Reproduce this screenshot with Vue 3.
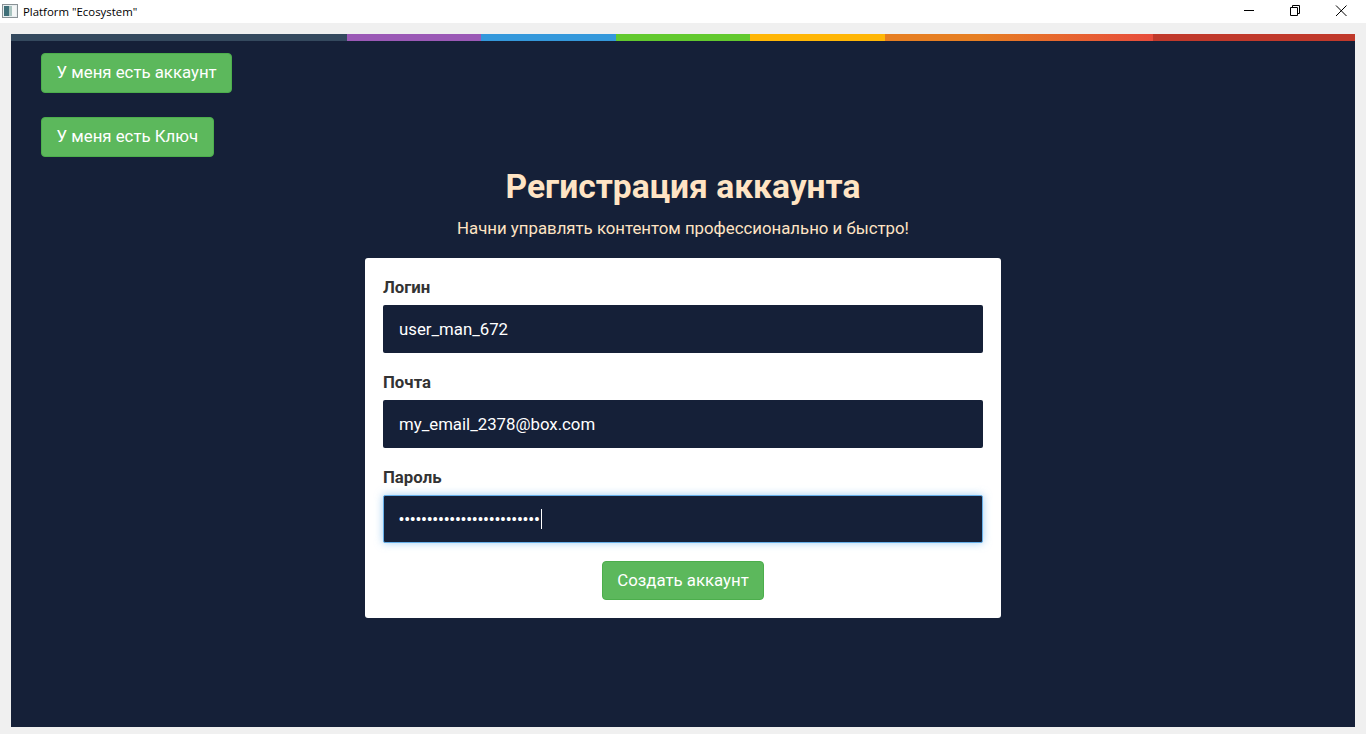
<script setup>
const segments = [
  { cls: 'seg-slate', grow: 25 },
  { cls: 'seg-purple', grow: 10 },
  { cls: 'seg-blue', grow: 10 },
  { cls: 'seg-green', grow: 10 },
  { cls: 'seg-yellow', grow: 10 },
  { cls: 'seg-orange', grow: 20 },
  { cls: 'seg-red', grow: 15 }
]
const fields = [
  { label: 'Логин', value: 'user_man_672' },
  { label: 'Почта', value: 'my_email_2378@box.com' }
]
const dots = '•'.repeat(25)
</script>

<template>
  <div class="window">
    <header class="titlebar">
      <div class="title-left">
        <svg class="app-icon" width="16" height="14" viewBox="0 0 16 14">
          <rect x="0.5" y="0.5" width="15" height="13" fill="#e8eef0" stroke="#8a9296" />
          <rect x="2" y="2" width="5" height="10" fill="#3f6f78" />
          <rect x="7" y="2" width="3" height="10" fill="#a9c4c0" />
          <rect x="10" y="2" width="4" height="10" fill="#f4f6f6" />
        </svg>
        <span class="title-text">Platform "Ecosystem"</span>
      </div>
      <div class="controls">
        <svg width="46" height="22" viewBox="0 0 46 22">
          <path d="M18 10.5h10" stroke="#000" fill="none" />
        </svg>
        <svg width="46" height="22" viewBox="0 0 46 22">
          <path d="M18.5 7.5h7v8h-7zM20.5 7.5v-2h7v8h-2" stroke="#000" fill="none" />
        </svg>
        <svg width="46" height="22" viewBox="0 0 46 22">
          <path d="M18 5.5l10.5 10.5M28.5 5.5L18 16" stroke="#000" fill="none" />
        </svg>
      </div>
    </header>

    <main class="panel">
      <div class="strip">
        <span
          v-for="s in segments"
          :key="s.cls"
          class="seg"
          :class="s.cls"
          :style="{ flexGrow: s.grow }"
        ></span>
      </div>
      <div class="actions">
        <button class="btn">У меня есть аккаунт</button>
        <button class="btn">У меня есть Ключ</button>
      </div>
      <h1 class="heading">Регистрация аккаунта</h1>
      <p class="sub">Начни управлять контентом профессионально и быстро!</p>
      <form class="card" @submit.prevent>
        <div v-for="f in fields" :key="f.label" class="field">
          <label class="label">{{ f.label }}</label>
          <div class="input">{{ f.value }}</div>
        </div>
        <div class="field">
          <label class="label">Пароль</label>
          <div class="input focused"><span class="dots">{{ dots }}</span><span class="caret"></span></div>
        </div>
        <div class="submit-row">
          <button class="btn" type="submit">Создать аккаунт</button>
        </div>
      </form>
    </main>
  </div>
</template>

<style scoped>
.window {
  width: 1366px;
  height: 734px;
  background: #f0f0f0;
  display: flex;
  flex-direction: column;
  overflow: hidden;
  font-family: Roboto, "Liberation Sans", sans-serif;
}
.titlebar {
  height: 23px;
  flex: none;
  background: #fff;
  display: flex;
  justify-content: space-between;
  align-items: flex-start;
}
.title-left {
  display: flex;
  align-items: center;
  height: 23px;
  padding-left: 2px;
  gap: 5px;
}
.app-icon { margin-bottom: 2px; }
.title-text {
  font-family: "Open Sans", "Noto Sans", sans-serif;
  font-size: 11.4px;
  color: #000;
  margin-bottom: 1px;
}
.controls {
  display: flex;
  margin-right: 2px;
}
.controls svg { display: block; }
.panel {
  margin: 11px 11px 7px;
  height: 693px;
  background: #152038;
  display: flex;
  flex-direction: column;
  align-items: center;
}
.strip {
  width: 100%;
  height: 7px;
  display: flex;
  flex: none;
}
.seg { flex: 1 1 0; }
.seg-slate { background: #34495e; }
.seg-purple { background: #9b59b6; }
.seg-blue { background: #3498db; }
.seg-green { background: #62c92e; }
.seg-yellow { background: #ffb606; }
.seg-orange { background: linear-gradient(90deg, #e67e22 0%, #e67e22 35%, #e74c3c 100%); }
.seg-red { background: #c0392b; }
.actions {
  align-self: flex-start;
  padding: 12.4px 0 0 30px;
  display: flex;
  flex-direction: column;
  align-items: flex-start;
  gap: 24.8px;
}
.btn {
  height: 39.2px;
  padding: 0 14.6px;
  background: #5cb85c;
  border: 1px solid #4cae4c;
  border-radius: 4px;
  color: #fff;
  font-family: inherit;
  font-size: 16.8px;
  font-weight: 400;
  line-height: 25.2px;
  white-space: nowrap;
}
.heading {
  margin: 9.4px 0 0;
  font-size: 33.6px;
  line-height: 42px;
  font-weight: 700;
  color: #ffe4c4;
}
.sub {
  margin: 10px 0 0;
  font-size: 16.8px;
  line-height: 20px;
  color: #ffe4c4;
}
.card {
  width: 636px;
  box-sizing: border-box;
  margin-top: 20px;
  padding: 18px;
  background: #fff;
  border-radius: 3px;
  display: flex;
  flex-direction: column;
  gap: 18px;
}
.field {
  display: flex;
  flex-direction: column;
  gap: 8px;
}
.label {
  font-size: 16.8px;
  line-height: 23px;
  height: 21px;
  font-weight: 700;
  color: #333;
}
.input {
  height: 48px;
  box-sizing: border-box;
  padding: 0 16px;
  border-radius: 2px;
  background: #152038;
  color: #fff;
  font-size: 16.8px;
  line-height: 48px;
  display: flex;
  align-items: center;
}
.focused {
  border: 1px solid #66afe9;
  padding: 0 15px;
  box-shadow: 0 0 8px rgba(102, 175, 233, 0.6);
}
.dots {
  font-family: "Liberation Sans", sans-serif;
  font-size: 14px;
  letter-spacing: 0.74px;
}
.caret {
  display: block;
  width: 1px;
  height: 20px;
  margin-left: 1px;
  background: #fff;
}
.submit-row {
  display: flex;
  justify-content: center;
}
</style>

<style>
html, body { margin: 0; background: #f0f0f0; }
</style>
